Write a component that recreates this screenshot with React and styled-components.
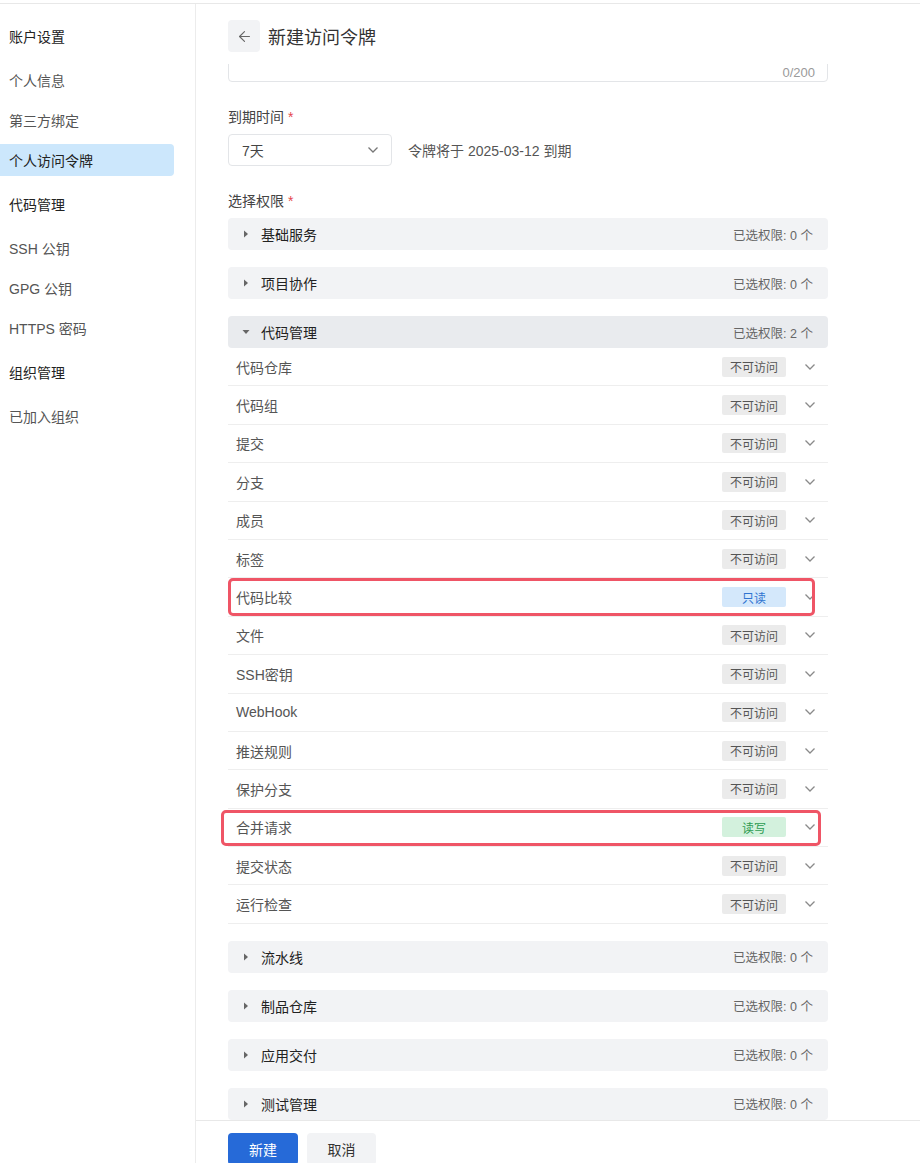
import React, { useLayoutEffect, useRef } from 'react';
import styled, { createGlobalStyle } from 'styled-components';
import { ArrowLeft } from 'lucide-react';

const GlobalStyle = createGlobalStyle`
  html, body {
    margin: 0;
    padding: 0;
    background: #fff;
    overflow: hidden;
  }
  * {
    box-sizing: border-box;
  }
  body {
    font-family: "Liberation Sans", "Noto Sans CJK SC", sans-serif;
    font-size: 14px;
    color: #333;
  }
`;

const Page = styled.div`
  display: flex;
  flex-direction: column;
  width: 920px;
`;

const TopLine = styled.div`
  height: 4px;
  border-bottom: 1px solid #e8e8e8;
`;

const Body = styled.div`
  display: flex;
`;

const Sidebar = styled.nav`
  width: 196px;
  flex: none;
  border-right: 1px solid #ececec;
  padding-top: 8px;
  min-height: 1159px;
`;

const NavHeading = styled.div`
  height: 48px;
  display: flex;
  align-items: center;
  padding-left: 9px;
  color: #222;
  font-size: 14px;
`;

const NavItem = styled.div`
  height: 40px;
  display: flex;
  align-items: center;

  span {
    display: flex;
    align-items: center;
    height: 32px;
    width: 174px;
    padding-left: 9px;
    border-radius: 0 4px 4px 0;
    color: ${p => (p.$active ? '#222' : '#555')};
    background: ${p => (p.$active ? '#cce7fc' : 'transparent')};
  }
`;

const Main = styled.main`
  flex: 1;
  display: flex;
  flex-direction: column;
`;

const Header = styled.header`
  display: flex;
  align-items: center;
  gap: 8px;
  padding: 16px 32px 12px;
`;

const BackButton = styled.button`
  width: 32px;
  height: 32px;
  border: none;
  border-radius: 4px;
  background: #f2f3f5;
  color: #666;
  display: grid;
  place-items: center;
  padding: 0;
`;

const Title = styled.h1`
  margin: 0;
  font-size: 18px;
  font-weight: 400;
  color: #333;
`;

const ScrollArea = styled.div`
  position: relative;
  height: 1056px;
  flex: none;
  overflow: hidden;
`;

const Content = styled.div`
  width: 600px;
  margin-left: 32px;
  padding: 0 0 40px;
`;

const FormItem = styled.div`
  margin-bottom: 24px;
`;

const Label = styled.div`
  height: 22px;
  line-height: 22px;
  margin-bottom: 6px;
  color: #444;
  font-size: 14px;

  em {
    font-style: normal;
    color: #e5484d;
    margin-left: 4px;
  }
`;

const TextArea = styled.div`
  position: relative;
  height: 88px;
  border: 1px solid #e3e5e8;
  border-radius: 4px;
`;

const Counter = styled.span`
  position: absolute;
  right: 12px;
  bottom: 1px;
  font-size: 13px;
  color: #9a9a9a;
`;

const SelectRow = styled.div`
  display: flex;
  align-items: center;
  gap: 16px;
`;

const Select = styled.div`
  width: 164px;
  height: 32px;
  border: 1px solid #e3e5e8;
  border-radius: 4px;
  display: flex;
  align-items: center;
  justify-content: space-between;
  padding: 0 12px 0 13px;
  color: #444;
`;

const Hint = styled.span`
  color: #555;
  font-size: 14px;
`;

const Groups = styled.div`
  display: flex;
  flex-direction: column;
  gap: 17px;
`;

const GroupBar = styled.div`
  height: 32px;
  border-radius: 4px;
  background: ${p => (p.$open ? '#e9ebee' : '#f2f3f5')};
  display: flex;
  align-items: center;
  padding: 0 15px 0 14px;
`;

const GroupName = styled.span`
  flex: 1;
  margin-left: 11px;
  color: #222;
  font-size: 14px;
`;

const GroupCount = styled.span`
  color: #666;
  font-size: 12.5px;
`;

const Row = styled.div`
  position: relative;
  height: 38.4px;
  border-bottom: 1px solid #eeeeee;
  display: flex;
  align-items: center;
  padding: 0 12px 0 8px;
`;

const RowName = styled.span`
  flex: 1;
  color: #555;
  font-size: 14px;
`;

const tagColors = {
  none: { bg: '#ebebeb', fg: '#555' },
  read: { bg: '#d4e8fb', fg: '#2f74d0' },
  write: { bg: '#d3f1dd', fg: '#2e9c52' },
};

const Tag = styled.span`
  width: 64px;
  height: 20px;
  border-radius: 2px;
  display: grid;
  place-items: center;
  font-size: 12px;
  background: ${p => tagColors[p.$kind].bg};
  color: ${p => tagColors[p.$kind].fg};
  margin-right: 18px;
`;

const Mark = styled.div`
  position: absolute;
  top: ${p => p.$top}px;
  bottom: ${p => p.$bottom}px;
  left: ${p => p.$left}px;
  right: ${p => p.$right}px;
  border: 3px solid #ef5566;
  border-radius: 5px;
  pointer-events: none;
`;

const Footer = styled.footer`
  border-top: 1px solid #e8e8e8;
  padding: 12px 32px;
  display: flex;
  gap: 9px;
`;

const Button = styled.button`
  width: ${p => (p.$primary ? 70 : 69)}px;
  height: 32px;
  border: none;
  border-radius: 4px;
  font-family: inherit;
  font-size: 14px;
  background: ${p => (p.$primary ? '#266ad8' : '#f2f3f5')};
  color: ${p => (p.$primary ? '#fff' : '#333')};
`;

const Caret = ({ open }) => (
  <svg width="8" height="8" viewBox="0 0 8 8">
    {open ? <path d="M0.5 2 L7.5 2 L4 6 Z" fill="#666" /> : <path d="M2 0.5 L6 4 L2 7.5 Z" fill="#666" />}
  </svg>
);

const Chevron = ({ color = '#8a8a8a' }) => (
  <svg width="12" height="8" viewBox="0 0 12 8">
    <polyline points="1.5,1.5 6,6 10.5,1.5" fill="none" stroke={color} strokeWidth="1.3" />
  </svg>
);

const perms = [
  ['代码仓库', 'none'],
  ['代码组', 'none'],
  ['提交', 'none'],
  ['分支', 'none'],
  ['成员', 'none'],
  ['标签', 'none'],
  ['代码比较', 'read', { top: 0, bottom: 0, left: 0, right: 13 }],
  ['文件', 'none'],
  ['SSH密钥', 'none'],
  ['WebHook', 'none'],
  ['推送规则', 'none'],
  ['保护分支', 'none'],
  ['合并请求', 'write', { top: 1, bottom: 0, left: -7, right: 7 }],
  ['提交状态', 'none'],
  ['运行检查', 'none'],
];

const tagText = { none: '不可访问', read: '只读', write: '读写' };

const Group = ({ name, count, open, children }) => (
  <div>
    <GroupBar $open={open}>
      <Caret open={open} />
      <GroupName>{name}</GroupName>
      <GroupCount>已选权限: {count} 个</GroupCount>
    </GroupBar>
    {children}
  </div>
);

export default function App() {
  const scrollRef = useRef(null);
  const areaRef = useRef(null);

  useLayoutEffect(() => {
    const el = areaRef.current;
    scrollRef.current.scrollTop = el.offsetTop + el.offsetHeight - 18;
  }, []);

  return (
    <Page>
      <GlobalStyle />
      <TopLine />
      <Body>
        <Sidebar>
          <NavHeading>账户设置</NavHeading>
          <NavItem><span>个人信息</span></NavItem>
          <NavItem><span>第三方绑定</span></NavItem>
          <NavItem $active><span>个人访问令牌</span></NavItem>
          <NavHeading>代码管理</NavHeading>
          <NavItem><span>SSH 公钥</span></NavItem>
          <NavItem><span>GPG 公钥</span></NavItem>
          <NavItem><span>HTTPS 密码</span></NavItem>
          <NavHeading>组织管理</NavHeading>
          <NavItem><span>已加入组织</span></NavItem>
        </Sidebar>
        <Main>
          <Header>
            <BackButton><ArrowLeft size={17} strokeWidth={1.6} /></BackButton>
            <Title>新建访问令牌</Title>
          </Header>
          <ScrollArea ref={scrollRef}>
            <Content>
              <FormItem>
                <TextArea ref={areaRef}>
                  <Counter>0/200</Counter>
                </TextArea>
              </FormItem>
              <FormItem>
                <Label>到期时间<em>*</em></Label>
                <SelectRow>
                  <Select>
                    <span>7天</span>
                    <Chevron color="#777" />
                  </Select>
                  <Hint>令牌将于 2025-03-12 到期</Hint>
                </SelectRow>
              </FormItem>
              <FormItem>
                <Label>选择权限<em>*</em></Label>
                <Groups>
                  <Group name="基础服务" count={0} />
                  <Group name="项目协作" count={0} />
                  <Group name="代码管理" count={2} open>
                    {perms.map(([name, kind, mark]) => (
                      <Row key={name}>
                        <RowName>{name}</RowName>
                        <Tag $kind={kind}>{tagText[kind]}</Tag>
                        <Chevron />
                        {mark && <Mark $top={mark.top} $bottom={mark.bottom} $left={mark.left} $right={mark.right} />}
                      </Row>
                    ))}
                  </Group>
                  <Group name="流水线" count={0} />
                  <Group name="制品仓库" count={0} />
                  <Group name="应用交付" count={0} />
                  <Group name="测试管理" count={0} />
                </Groups>
              </FormItem>
            </Content>
          </ScrollArea>
          <Footer>
            <Button $primary>新建</Button>
            <Button>取消</Button>
          </Footer>
        </Main>
      </Body>
    </Page>
  );
}
